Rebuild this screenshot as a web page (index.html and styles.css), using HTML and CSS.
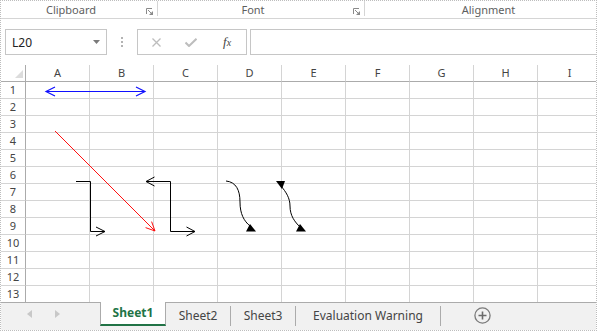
FILE: index.html
```html
<!DOCTYPE html>
<html lang="en">
<head>
  <meta charset="UTF-8" />
  <title>Sheet1 - Shapes</title>
  <link rel="stylesheet" href="styles.css">
</head>
<body>
  <div class="window">
    <!-- ribbon group captions -->
    <div class="ribbon">
      <div class="group group-clipboard">
        <span class="group-label">Clipboard</span>
        <svg class="launcher" viewBox="0 0 7 7"><path d="M0.5 6V0.5H6" fill="none" stroke="#8a8a8a"/><path d="M2 2L5.5 5.5" stroke="#8a8a8a"/><path d="M3 7H7V3Z" fill="#8a8a8a"/></svg>
      </div>
      <div class="group-sep"></div>
      <div class="group group-font">
        <span class="group-label">Font</span>
        <svg class="launcher" viewBox="0 0 7 7"><path d="M0.5 6V0.5H6" fill="none" stroke="#8a8a8a"/><path d="M2 2L5.5 5.5" stroke="#8a8a8a"/><path d="M3 7H7V3Z" fill="#8a8a8a"/></svg>
      </div>
      <div class="group-sep"></div>
      <div class="group group-align">
        <span class="group-label">Alignment</span>
      </div>
    </div>

    <!-- name box + formula bar -->
    <div class="formula-bar">
      <div class="name-box">
        <span>L20</span>
        <svg class="name-drop" viewBox="0 0 7 4"><path d="M0 0H7L3.5 4Z" fill="#7a7a7a"/></svg>
      </div>
      <div class="grip"><i></i><i></i><i></i></div>
      <div class="fx-buttons">
        <svg class="btn-cancel" viewBox="0 0 9 9"><path d="M0.5 0.5L8.5 8.5M8.5 0.5L0.5 8.5" stroke="#bdbdbd" stroke-width="1.3"/></svg>
        <svg class="btn-enter" viewBox="0 0 12 9"><path d="M0.5 4.5L4 8L11.5 0.8" fill="none" stroke="#bdbdbd" stroke-width="2"/></svg>
        <span class="btn-fx"><i>f</i><i class="fx-x">x</i></span>
      </div>
      <div class="formula-input"></div>
    </div>

    <!-- worksheet -->
    <div class="sheet">
      <div class="grid">
        <div class="corner"><span class="corner-mark"></span></div><div class="col-head">A</div><div class="col-head">B</div><div class="col-head">C</div><div class="col-head">D</div><div class="col-head">E</div><div class="col-head">F</div><div class="col-head">G</div><div class="col-head">H</div><div class="col-head">I</div>
        <div class="row-head">1</div><div></div><div></div><div></div><div></div><div></div><div></div><div></div><div></div><div></div>
        <div class="row-head">2</div><div></div><div></div><div></div><div></div><div></div><div></div><div></div><div></div><div></div>
        <div class="row-head">3</div><div></div><div></div><div></div><div></div><div></div><div></div><div></div><div></div><div></div>
        <div class="row-head">4</div><div></div><div></div><div></div><div></div><div></div><div></div><div></div><div></div><div></div>
        <div class="row-head">5</div><div></div><div></div><div></div><div></div><div></div><div></div><div></div><div></div><div></div>
        <div class="row-head">6</div><div></div><div></div><div></div><div></div><div></div><div></div><div></div><div></div><div></div>
        <div class="row-head">7</div><div></div><div></div><div></div><div></div><div></div><div></div><div></div><div></div><div></div>
        <div class="row-head">8</div><div></div><div></div><div></div><div></div><div></div><div></div><div></div><div></div><div></div>
        <div class="row-head">9</div><div></div><div></div><div></div><div></div><div></div><div></div><div></div><div></div><div></div>
        <div class="row-head">10</div><div></div><div></div><div></div><div></div><div></div><div></div><div></div><div></div><div></div>
        <div class="row-head">11</div><div></div><div></div><div></div><div></div><div></div><div></div><div></div><div></div><div></div>
        <div class="row-head">12</div><div></div><div></div><div></div><div></div><div></div><div></div><div></div><div></div><div></div>
        <div class="row-head">13</div><div></div><div></div><div></div><div></div><div></div><div></div><div></div><div></div><div></div>
      </div>

      <!-- drawn shapes float over the cells (page coordinates) -->
      <svg class="shapes" viewBox="1 65 596 237" width="596" height="237">
        <path d="M46 91.5H145M55 87L46 91.5L55 96M136 87L145 91.5L136 96" fill="none" stroke="#1010ff" stroke-width="1.2"/>
        <path d="M55 131L155 231M145.6 227.6L155 231L151.6 221.6" fill="none" stroke="#ff1010"/>
        <g fill="none" stroke="#000">
          <path d="M76 181.5H90.5V231.5H105M96 227L105 231.5L96 236"/>
          <path d="M146 181.5H170.5V231.5H195M154.5 177L146 181.5L154.5 186M186.5 227L195 231.5L186.5 236"/>
          <path d="M226 181C236 182 240 190 240 202C240 214 244 221 250 226"/>
          <path d="M281 186C286 192 290 198 290 206C290 216 295 222 300 227"/>
        </g>
        <g fill="#000">
          <polygon points="250,224 246,231.5 256,231.5"/>
          <polygon points="276,181 285,181 282,189"/>
          <polygon points="300,224 296,231.5 306,231.5"/>
        </g>
      </svg>
    </div>

    <!-- sheet tabs -->
    <div class="tab-bar">
      <div class="tab-nav">
        <svg class="nav-arrow" viewBox="0 0 5 8"><path d="M5 0V8L0 4Z" fill="#c8c8c8"/></svg>
        <svg class="nav-arrow" viewBox="0 0 5 8"><path d="M0 0V8L5 4Z" fill="#c8c8c8"/></svg>
      </div>
      <div class="tab-active">Sheet1</div>
      <div class="tab">Sheet2</div>
      <div class="tab">Sheet3</div>
      <div class="tab tab-wide">Evaluation Warning</div>
      <svg class="add-sheet" viewBox="0 0 17 17"><circle cx="8.5" cy="8.5" r="7.6" fill="none" stroke="#7a7a7a" stroke-width="1.3"/><path d="M8.5 4.5V12.5M4.5 8.5H12.5" stroke="#6a6a6a" stroke-width="1.6"/></svg>
    </div>
  </div>
</body>
</html>
```

FILE: styles.css
```css
/* ---------- reset ---------- */
* {
  margin: 0;
  padding: 0;
  box-sizing: border-box;
}

body {
  font-family: "Noto Sans", "Open Sans", sans-serif;
  background: #ffffff;
}

.window {
  width: 597px;
  height: 331px;
  border: 1px dotted #bdbdbd;
  display: flex;
  flex-direction: column;
  overflow: hidden;
}

/* ---------- ribbon captions ---------- */
.ribbon {
  height: 18px;
  flex: none;
  display: flex;
  border-bottom: 1px solid #d5d5d5;
  font-size: 11px;
  color: #5e5e5e;
}
.group {
  display: flex;
}
.group-clipboard { width: 156px; }
.group-font      { width: 206px; }
.group-align     { flex: 1; padding-left: 16px; }

.group-label {
  flex: 1;
  text-align: center;
  line-height: 17px;
}
.launcher {
  width: 7px;
  height: 7px;
  margin: 7px 4px 0 5px;
}
.group-sep {
  width: 1px;
  height: 15px;
  background: #d5d5d5;
}

/* ---------- formula bar ---------- */
.formula-bar {
  height: 46px;
  flex: none;
  display: flex;
  padding: 10px 0 10px 4px;
}
.name-box {
  width: 102px;
  border: 1px solid #c6c6c6;
  display: flex;
  align-items: center;
  justify-content: space-between;
  padding: 0 6px;
  font-size: 12px;
  color: #222222;
}
.name-drop {
  width: 7px;
  height: 4px;
}
.grip {
  width: 30px;
  display: flex;
  flex-direction: column;
  align-items: center;
  justify-content: center;
  gap: 2px;
}
.grip i {
  width: 2px;
  height: 2px;
  background: #b3b3b3;
}
.fx-buttons {
  width: 110px;
  border: 1px solid #c6c6c6;
  display: flex;
  align-items: center;
}
.btn-cancel {
  width: 9px;
  height: 9px;
  margin-left: 14px;
}
.btn-enter {
  width: 12px;
  height: 9px;
  margin-left: 24px;
}
.btn-fx {
  margin-left: 26px;
  font-family: "Liberation Serif", serif;
  font-size: 13px;
  color: #444444;
}
.btn-fx .fx-x {
  font-size: 10px;
}
.formula-input {
  flex: 1;
  margin-left: 3px;
  border: 1px solid #c6c6c6;
  border-right: none;
}

/* ---------- worksheet grid ---------- */
.sheet {
  height: 237px;
  flex: none;
  position: relative;
  overflow: hidden;
}
.grid {
  width: 601px;
  display: grid;
  grid-template-columns: 25px repeat(9, 64px);
  grid-auto-rows: 17px;
}
.grid > div {
  border-right: 1px solid #d4d4d4;
  border-bottom: 1px solid #d4d4d4;
}
.grid .col-head,
.grid .row-head {
  font-size: 11px;
  line-height: 16px;
  text-align: center;
  color: #444444;
}
.grid .col-head {
  border-bottom-color: #ababab;
}
.grid .row-head {
  border-right-color: #ababab;
}
.grid .corner {
  border-right-color: #ababab;
  border-bottom-color: #ababab;
  display: flex;
  justify-content: flex-end;
  align-items: flex-end;
  padding: 0 2px 3px 0;
}
.corner-mark {
  width: 0;
  height: 0;
  border-left: 8px solid transparent;
  border-bottom: 8px solid #dcdcdc;
}

.shapes {
  position: absolute;
  top: 0;
  left: 0;
  pointer-events: none;
}

/* ---------- sheet tabs ---------- */
.tab-bar {
  flex: 1;
  display: flex;
  align-items: flex-start;
  border-top: 1px solid #ababab;
  background: #f1f1f1;
  font-size: 12px;
  color: #444444;
}
.tab-nav {
  width: 99px;
  display: flex;
  gap: 23px;
  padding: 7px 0 0 26px;
}
.nav-arrow {
  width: 5px;
  height: 8px;
}
.tab-active {
  width: 66px;
  height: 24px;
  margin-top: -1px;
  background: #ffffff;
  border-left: 1px solid #ababab;
  border-right: 1px solid #ababab;
  border-bottom: 2px solid #217346;
  color: #217346;
  font-weight: bold;
  text-align: center;
  line-height: 22px;
}
.tab {
  width: 65px;
  height: 20px;
  margin-top: 3px;
  border-right: 1px solid #ababab;
  text-align: center;
  line-height: 20px;
}
.tab-wide {
  width: 145px;
}
.add-sheet {
  width: 17px;
  height: 17px;
  margin: 4px 0 0 33px;
}
```
